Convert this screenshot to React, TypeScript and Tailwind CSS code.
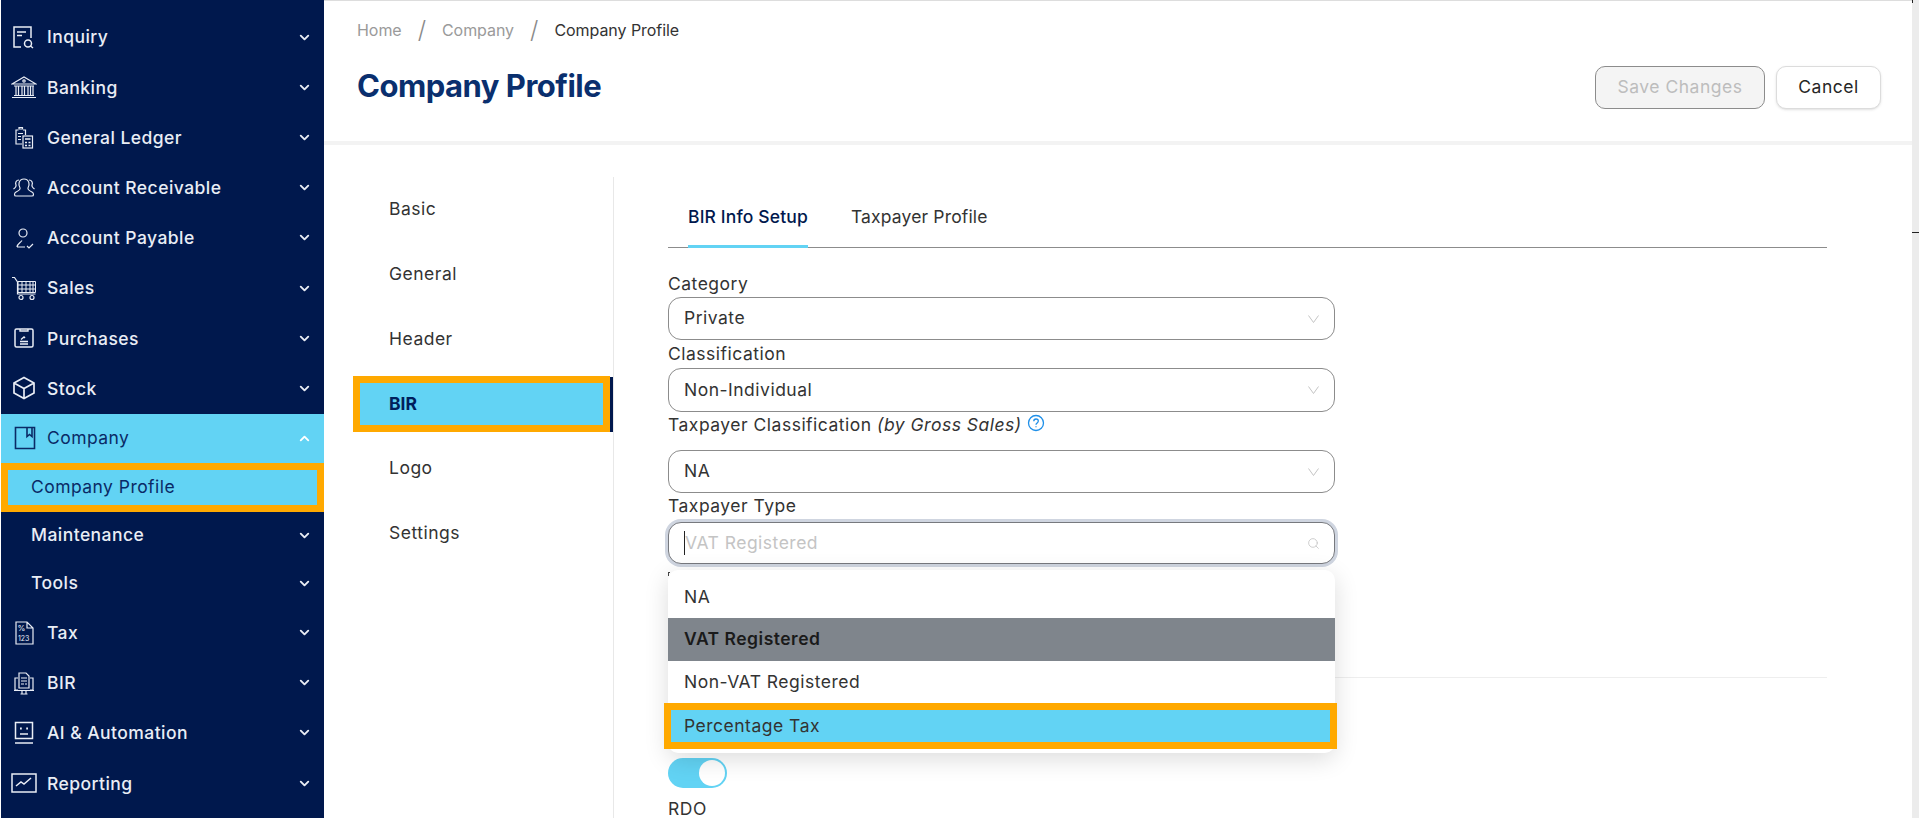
import { ChevronDown, ChevronUp, Search } from "lucide-react";
import type { ReactNode } from "react";

const font = { fontFamily: "Inter, 'Open Sans', sans-serif" };

const Svg = ({ children, className = "w-[26px] h-[26px]" }: { children: ReactNode; className?: string }) => (
  <svg viewBox="0 0 26 26" fill="none" stroke="currentColor" strokeWidth="1.2" className={className}>
    {children}
  </svg>
);

const InquiryIcon = () => (
  <Svg>
    <path d="M20 14V3H3v20h7" strokeWidth="1.5" />
    <path d="M6 8h9M6 11.500h5" strokeWidth="1.5" />
    <circle cx="17" cy="19.500" r="3.500" strokeWidth="1.5" />
    <path d="M19.500 22l2.500 2" strokeWidth="1.5" />
  </Svg>
);
const BankIcon = () => (
  <Svg>
    <path d="M1 10L13 3l12 7zM3 12h20M1 23.500h24M3 21.500h20" />
    <path d="M5 12v9M7.500 12v9M11 12v9M13.500 12v9M17 12v9M19.500 12v9M22 12v9" />
    <circle cx="13" cy="7" r="1.200" />
  </Svg>
);
const LedgerIcon = () => (
  <Svg>
    <path d="M11 20H5V6h2.500M12 6h2.500v5" />
    <path d="M8 5h3.500V3.500H8zM7 9.500h5M7 12.500h3M7 15.500h3" />
    <rect x="12" y="12" width="9.500" height="12" />
    <path d="M14 15h5.500M14 18.500h2M17.500 18.500h2M14 21.500h2M17.500 21.500h2" strokeWidth="1.400" />
  </Svg>
);
const ReceivableIcon = () => (
  <Svg>
    <path d="M9 13c-2-3-1.500-9 4-9s6 6 4 9c-.5 2 2 3 4 4 2 1 2 4 0 4H5c-2 0-2-3 0-4 2-1 4.500-2 4-4z" />
    <path d="M8 5C5 5 4 8 5 10c.5 2-1 3-2.500 4M18 5c3 0 4 3 3 5-.5 2 1 3 2.500 4" />
  </Svg>
);
const PayableIcon = () => (
  <Svg>
    <circle cx="12" cy="8" r="4" />
    <path d="M6 22c0-3 3-4 5-6.500M6 22h8M16 21l2 2 4-4" />
  </Svg>
);
const CartIcon = () => (
  <Svg>
    <path d="M1 2.500h2.500l3 4.500v12h18" />
    <path d="M7 6.500h17.500v11H7zM7 10h17.500M7 14h17.500M11 6.500v11M15 6.500v11M19 6.500v11M22 6.500v11" strokeWidth="1" />
    <circle cx="10" cy="22.500" r="2" />
    <circle cx="21" cy="22.500" r="2" />
  </Svg>
);
const PurchasesIcon = () => (
  <Svg>
    <rect x="4" y="4" width="18" height="18" rx="1.500" strokeWidth="1.500" />
    <path d="M9 4v2h8V4M9 16.500h8M9 19h8M10 14.500l3-2.500 1 1" strokeWidth="1.400" />
  </Svg>
);
const StockIcon = () => (
  <Svg>
    <path d="M13 2.500l10 5.500v10l-10 5.500L3 18V8zM3 8l10 5.500L23 8M13 13.500v10" strokeWidth="1.700" />
  </Svg>
);
const CompanyIcon = () => (
  <Svg>
    <path d="M4.500 2.500h19v21h-19zM16 2.500v9l2.500-2 2.500 2v-9" strokeWidth="1.600" />
  </Svg>
);
const TaxIcon = () => (
  <Svg>
    <path d="M5 2h11l6 6v16H5zM16 2v6h6" />
    <text x="6.500" y="11" fontSize="8" fill="currentColor" stroke="none">%</text>
    <text x="7" y="21" fontSize="7" fill="currentColor" stroke="none">123</text>
  </Svg>
);
const BirIcon = () => (
  <Svg>
    <path d="M7 20H4V8h3M19 8h3v12h-3M3 20.500h20M11 21v3M15 21v3M9.500 24h7" />
    <path d="M8 18V3h7l3 3v12zM10 8h6M10 11h6M10 14h3M14 14h2" />
  </Svg>
);
const AiIcon = () => (
  <Svg>
    <rect x="4.500" y="2.500" width="17" height="16" strokeWidth="1.500" />
    <path d="M4 23h18" strokeWidth="1.500" />
    <path d="M9 8.500h1.800M15.200 8.500H17" strokeWidth="2" />
    <path d="M9 14h8" strokeWidth="1.500" />
  </Svg>
);
const ReportingIcon = () => (
  <Svg>
    <rect x="1" y="4" width="24" height="18" strokeWidth="1.500" />
    <path d="M5 16l5-4 3 2 7-6" strokeWidth="1.500" />
  </Svg>
);

const topItems = [
  { label: "Inquiry", icon: <InquiryIcon /> },
  { label: "Banking", icon: <BankIcon /> },
  { label: "General Ledger", icon: <LedgerIcon /> },
  { label: "Account Receivable", icon: <ReceivableIcon /> },
  { label: "Account Payable", icon: <PayableIcon /> },
  { label: "Sales", icon: <CartIcon /> },
  { label: "Purchases", icon: <PurchasesIcon /> },
  { label: "Stock", icon: <StockIcon /> },
];
const bottomItems = [
  { label: "Tax", icon: <TaxIcon /> },
  { label: "BIR", icon: <BirIcon /> },
  { label: "AI & Automation", icon: <AiIcon /> },
  { label: "Reporting", icon: <ReportingIcon /> },
];

const NavRow = ({ label, icon }: { label: string; icon: ReactNode }) => (
  <div className="flex h-[50.2px] items-center pl-[10px] pr-[12px] text-[#e9edf5]">
    <span className="flex w-[36px] shrink-0 justify-start">{icon}</span>
    <span className="pt-px text-[17.5px] font-medium tracking-[0.45px]">{label}</span>
    <ChevronDown className="ml-auto h-[15px] w-[15px]" strokeWidth={3} />
  </div>
);

const SubRow = ({ label }: { label: string }) => (
  <div className="flex h-[48px] items-center pl-[30px] pr-[12px] text-[#e9edf5]">
    <span className="text-[17.5px] font-medium tracking-[0.45px]">{label}</span>
    <ChevronDown className="ml-auto h-[15px] w-[15px]" strokeWidth={3} />
  </div>
);

const Sidebar = () => (
  <aside className="ml-px h-full w-[323px] shrink-0 overflow-hidden bg-[#00184d] pt-[12px]">
    {topItems.map((item) => (
      <NavRow key={item.label} {...item} />
    ))}
    <div className="flex h-[49px] items-center bg-[#62d3f4] pl-[10px] pr-[12px] text-[#0a2a66]">
      <span className="flex w-[36px] shrink-0 justify-start">
        <CompanyIcon />
      </span>
      <span className="pt-px text-[17.5px] tracking-[0.45px]">Company</span>
      <ChevronUp className="ml-auto h-[15px] w-[15px] text-white" strokeWidth={3} />
    </div>
    <div className="flex h-[49px] items-center border-[7px] border-[#ffa900] bg-[#62d3f4] pl-[23px] text-[#0a2a66]">
      <span className="text-[17.5px] tracking-[0.45px]">Company Profile</span>
    </div>
    <SubRow label="Maintenance" />
    <SubRow label="Tools" />
    {bottomItems.map((item) => (
      <NavRow key={item.label} {...item} />
    ))}
  </aside>
);

const Header = () => (
  <header className="flex h-[145px] shrink-0 flex-col border-t border-b-4 border-t-[#dddddd] border-b-[#f3f3f3] pl-[33px] pr-[31px]">
    <div className="mt-[16px] flex h-[26px] items-center text-[16px] tracking-[-0.05px] text-[#9a9a9a]">
      <span>Home</span>
      <span className="mx-[16px] text-[24px] font-light text-[#8a8a8a]">/</span>
      <span>Company</span>
      <span className="mx-[16px] text-[24px] font-light text-[#8a8a8a]">/</span>
      <span className="text-[#333333]">Company Profile</span>
    </div>
    <div className="flex items-start justify-between">
      <h1 className="mt-[20px] text-[31px] font-bold tracking-[-0.5px] text-[#0a2f6e]">Company Profile</h1>
      <div className="mt-[23px] flex gap-[11px] text-[17.5px] tracking-[0.5px]">
        <button className="h-[43px] w-[170px] rounded-[10px] border border-[#8c8c8c] bg-[#f4f4f4] text-[#bdbdbd]">
          Save Changes
        </button>
        <button className="h-[43px] w-[105px] rounded-[10px] border border-[#dcdcdc] bg-white text-[#262626] shadow-sm">
          Cancel
        </button>
      </div>
    </div>
  </header>
);

const SideNav = () => (
  <nav className="mt-[32px] ml-[29px] w-[261px] shrink-0 border-r border-[#e8e8e8] text-[17.5px] tracking-[0.5px] text-[#333333]">
    {["Basic", "General", "Header"].map((l) => (
      <div key={l} className="flex h-[65px] items-center pl-[36px]">
        {l}
      </div>
    ))}
    <div className="relative my-[4px] flex h-[56px] w-[257px] items-center border-[7px] border-[#ffa900] bg-[#62d3f4] pl-[29px] font-bold tracking-normal text-[#001f5c]">
      BIR
      <span className="absolute -top-[6px] -right-[10px] h-[55px] w-[3px] bg-[#00184d]" />
    </div>
    {["Logo", "Settings"].map((l) => (
      <div key={l} className="flex h-[65px] items-center pl-[36px]">
        {l}
      </div>
    ))}
  </nav>
);

const Vee = () => (
  <svg viewBox="0 0 11 8" className="h-[8px] w-[11px]" fill="none" stroke="#c4c4c4" strokeWidth="1">
    <path d="M.5.5l5 7 5-7" />
  </svg>
);

const Select = ({ value, tall }: { value: string; tall?: boolean }) => (
  <div
    className={`flex w-[667px] items-center justify-between rounded-[13px] border border-[#8c8c8c] bg-white pl-[15px] pr-[15px] text-[#333333] ${
      tall ? "h-[44px]" : "h-[43px]"
    }`}
  >
    <span>{value}</span>
    <Vee />
  </div>
);

const Form = () => (
  <section className="ml-[54px] mr-[85px] flex-1 text-[17.5px] tracking-[0.5px] text-[#333333]">
    <div className="mt-[32px] flex h-[71px] items-end gap-[43px] border-b border-[#8c8c8c] pl-[20px] tracking-[0.15px]">
      <div className="relative flex h-full items-center pt-[11px] font-medium text-[#00184d]">
        BIR Info Setup
        <span className="absolute -bottom-px left-0 h-[3px] w-full bg-[#62d3f4]" />
      </div>
      <div className="flex h-full items-center pt-[11px]">Taxpayer Profile</div>
    </div>
    <label className="mt-[23px] block h-[26px] leading-[25px]">Category</label>
    <Select value="Private" />
    <label className="block h-[28px] leading-[28px]">Classification</label>
    <Select value="Non-Individual" tall />
    <label className="flex h-[38px] items-start gap-[5px]">
      <span>
        Taxpayer Classification <em>(by Gross Sales)</em>
      </span>
      <svg viewBox="0 0 18 18" className="mt-[2px] h-[18px] w-[18px]" fill="none" stroke="#1e8fe8" strokeWidth="1.300">
        <circle cx="9" cy="9" r="7.500" />
        <path d="M6.800 7.200C6.800 5.800 7.900 5 9 5s2.300.8 2.300 2.100c0 1.900-2.300 1.700-2.300 3.600M9 12.300v1" />
      </svg>
    </label>
    <Select value="NA" />
    <label className="block h-[29px] leading-[26px]">Taxpayer Type</label>
    <div className="relative w-[667px]">
      <div className="flex h-[42px] items-center justify-between rounded-[13px] border border-[#77797e] bg-white pl-[15px] pr-[14px] shadow-[0_0_0_3px_#cfd5e0]">
        <span className="border-l border-[#222222] leading-[24px] text-[#c4c4c4]">VAT Registered</span>
        <Search className="h-[13px] w-[13px] text-[#c4c4c4]" strokeWidth={1.500} />
      </div>
      <span className="absolute left-0 top-[50px] z-20 h-[4px] w-[2px] border-l border-t border-[#444444]" />
      <div className="absolute left-0 top-[48px] z-10 w-[667px] rounded-[10px] bg-white shadow-[0_6px_24px_rgba(0,0,0,0.14)]">
        <div className="flex h-[48px] items-center rounded-t-[10px] pl-[16px] pt-[6px]">NA</div>
        <div className="flex h-[43px] items-center bg-[#7f858c] pl-[16px] font-semibold text-[#1a1a1a]">VAT Registered</div>
        <div className="flex h-[42px] items-center pl-[16px]">Non-VAT Registered</div>
        <div className="-ml-[4px] -mr-[2px] flex h-[46px] items-center border-[7px] border-[#ffa900] bg-[#62d3f4] pl-[13px]">Percentage Tax</div>
        <div className="h-[4px]" />
      </div>
    </div>
    <div className="mt-[113px] border-t border-[#eeeeee]" />
    <div className="mt-[80px] flex h-[30px] w-[59px] items-center justify-end rounded-full bg-[#62d3f4] pr-[2px]">
      <span className="h-[26px] w-[26px] rounded-full bg-white" />
    </div>
    <label className="mt-[8px] block">RDO</label>
  </section>
);

export default function App() {
  return (
    <div className="flex h-[818px] w-[1919px] overflow-hidden bg-white" style={font}>
      <Sidebar />
      <main className="flex min-w-0 flex-1 flex-col">
        <Header />
        <div className="flex min-h-0 flex-1">
          <SideNav />
          <Form />
        </div>
      </main>
      <div className="relative h-full w-[7px] shrink-0 bg-[#ececec]">
        <span className="absolute left-0 top-[232px] h-px w-full bg-[#222222]" />
        <span className="absolute left-0 top-0 h-[3px] w-px bg-[#222222]" />
      </div>
    </div>
  );
}
